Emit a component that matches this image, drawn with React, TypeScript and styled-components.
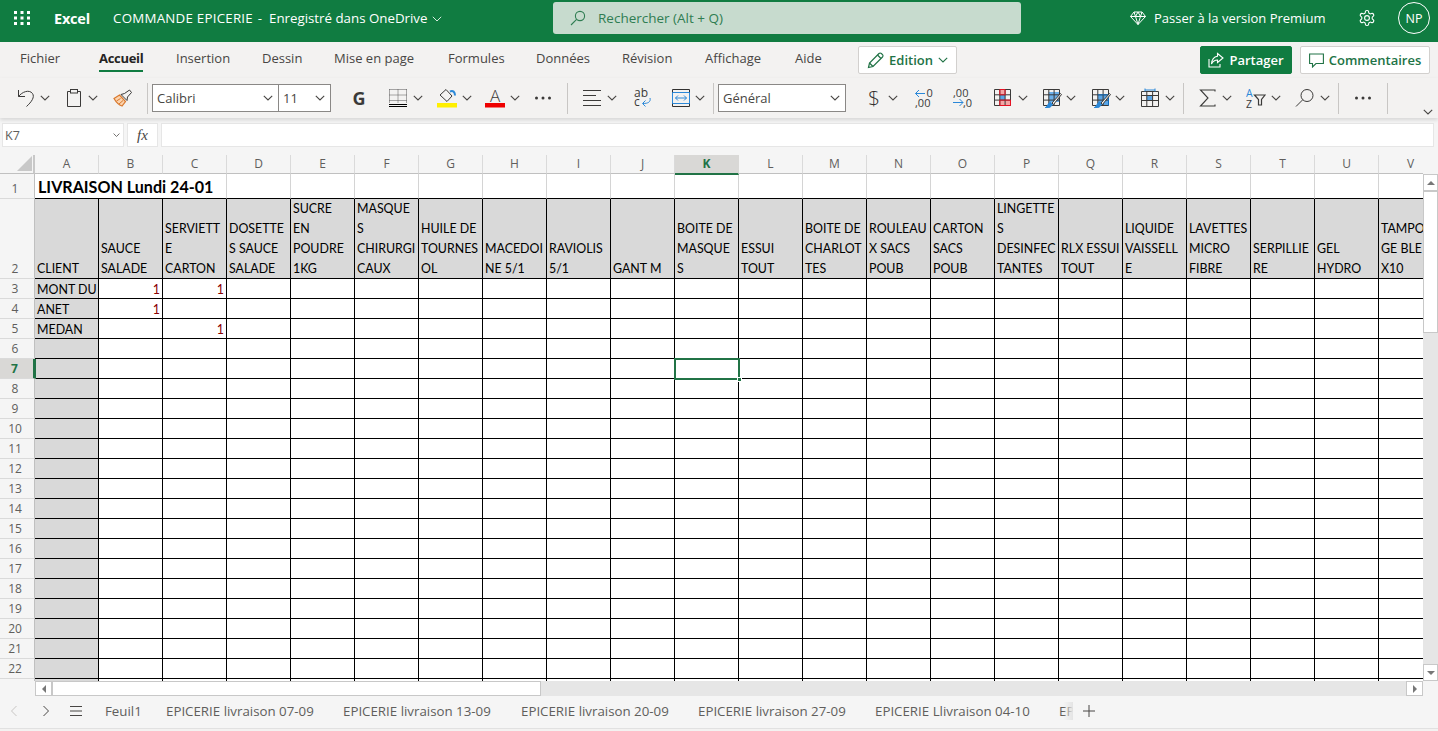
import React from "react";
import styled, { createGlobalStyle, css } from "styled-components";

const UI = `"Open Sans", "Noto Sans", "Liberation Sans", sans-serif`;
const CELL = `Lato, "Open Sans", "Liberation Sans", sans-serif`;
const GREEN = "#107C41";
const DARK_GREEN = "#217346";

const Global = createGlobalStyle`
  html, body { margin: 0; padding: 0; overflow: hidden; background: #f3f2f1; }
  * { box-sizing: border-box; }
`;

const Page = styled.div`
  width: 1438px;
  height: 731px;
  display: flex;
  flex-direction: column;
  overflow: hidden;
  font-family: ${UI};
  background: #f3f2f1;
`;

/* ---------- top bar ---------- */
const TopBar = styled.header`
  height: 42px;
  flex: none;
  background: ${GREEN};
  color: #fff;
  display: flex;
  align-items: center;
  padding-bottom: 6px;
`;
const TopLeft = styled.div`
  width: 553px;
  flex: none;
  display: flex;
  align-items: center;
  padding-left: 14px;
`;
const Brand = styled.span`
  font-size: 14.5px;
  font-weight: 700;
  margin-left: 24px;
  width: 59px;
  letter-spacing: -0.2px;
`;
const DocName = styled.span`
  font-size: 13.3px;
  white-space: nowrap;
  letter-spacing: 0.25px;
  width: 138px;
  flex: none;
`;
const DocDash = styled.span`
  font-size: 13.3px;
  width: 18px;
  flex: none;
  text-align: center;
`;
const DocStatus = styled.span`
  font-size: 13.3px;
  white-space: nowrap;
  width: 156px;
  flex: none;
`;
const TitleChevron = styled.svg`
  width: 10px;
  height: 6px;
  margin-left: 7px;
  margin-top: 2px;
  fill: none;
  stroke: #d7ebdf;
  stroke-width: 1;
`;
const SearchBox = styled.div`
  width: 468px;
  height: 32px;
  flex: none;
  background: #c7dbce;
  border-radius: 3px;
  display: flex;
  align-items: center;
  padding-left: 17px;
  color: #2f7d52;
  font-size: 13.5px;
  gap: 12px;
`;
const PremiumLink = styled.div`
  margin-left: 109px;
  width: 204px;
  display: flex;
  align-items: center;
  gap: 8px;
  font-size: 13px;
  white-space: nowrap;
`;
const Gear = styled.div`
  margin-left: 24px;
  width: 18px;
  height: 18px;
  display: flex;
`;
const Avatar = styled.div`
  margin-left: 22px;
  width: 32px;
  height: 32px;
  border: 1px solid #fff;
  border-radius: 50%;
  display: flex;
  align-items: center;
  justify-content: center;
  font-size: 12.5px;
`;

/* ---------- ribbon tabs ---------- */
const RibbonTabs = styled.nav`
  height: 36px;
  flex: none;
  display: flex;
  align-items: flex-start;
  padding-left: 20px;
`;
const TabSlot = styled.div<{ $w: number }>`
  width: ${(p) => p.$w}px;
  flex: none;
  height: 30px;
  padding-top: 7px;
`;
const TabLabel = styled.div<{ $active?: boolean }>`
  width: fit-content;
  height: 23px;
  font-size: 13px;
  line-height: 18px;
  color: ${(p) => (p.$active ? "#252423" : "#484644")};
  font-weight: ${(p) => (p.$active ? 700 : 400)};
  border-bottom: 2px solid ${(p) => (p.$active ? GREEN : "transparent")};
  white-space: nowrap;
  ${(p) => p.$active && css`letter-spacing: -0.3px;`}
`;
const RibbonButton = styled.div<{ $w: number; $ml: number; $primary?: boolean }>`
  width: ${(p) => p.$w}px;
  margin-left: ${(p) => p.$ml}px;
  height: 28px;
  margin-top: 4px;
  flex: none;
  display: flex;
  align-items: center;
  justify-content: center;
  gap: 5px;
  border-radius: 2px;
  font-size: 13px;
  font-weight: 600;
  background: ${(p) => (p.$primary ? GREEN : "#fff")};
  color: ${(p) => (p.$primary ? "#fff" : DARK_GREEN)};
  border: 1px solid ${(p) => (p.$primary ? GREEN : "#d2d0ce")};
`;

/* ---------- toolbar ---------- */
const Toolbar = styled.div`
  height: 40px;
  flex: none;
  display: flex;
  align-items: center;
  box-shadow: 0 2px 4px rgba(0, 0, 0, 0.13);
  position: relative;
  z-index: 3;
`;
const Tool = styled.div<{ $w?: number; $ml: number; $end?: boolean }>`
  width: ${(p) => p.$w ?? 20}px;
  margin-left: ${(p) => p.$ml}px;
  flex: none;
  display: flex;
  justify-content: center;
  align-items: center;
  color: #323130;
  ${(p) => p.$end && css`align-self: flex-end; margin-bottom: 3px;`}
`;
const ToolSep = styled.div<{ $ml: number }>`
  width: 1px;
  height: 31px;
  flex: none;
  margin-left: ${(p) => p.$ml}px;
  background: #c8c6c4;
`;
const SelectBox = styled.div<{ $w: number; $ml?: number; $joined?: boolean }>`
  width: ${(p) => p.$w}px;
  margin-left: ${(p) => p.$ml ?? 0}px;
  height: 28px;
  flex: none;
  background: #fff;
  border: 1px solid #8a8886;
  ${(p) => p.$joined && css`border-left: none;`}
  display: flex;
  align-items: center;
  justify-content: space-between;
  padding: 0 5px 0 4px;
  font-size: 13px;
  color: #484644;
`;
const BoldG = styled.span`
  font-family: ${UI};
  font-size: 18px;
  font-weight: 700;
  color: #3b3a39;
`;
const Dollar = styled.span`
  font-size: 21px;
  font-weight: 300;
  color: #323130;
`;

/* ---------- formula bar ---------- */
const FormulaBar = styled.div`
  height: 37px;
  flex: none;
  display: flex;
  padding: 5px 4px 0 2px;
  align-items: flex-start;
  background: #f5f5f5;
`;
const NameBox = styled.div`
  width: 122px;
  height: 24px;
  background: #fff;
  border: 1px solid #e6e6e6;
  display: flex;
  align-items: center;
  justify-content: space-between;
  padding: 0 3px 0 2px;
  font-size: 12.5px;
  color: #605e5c;
`;
const FxBox = styled.div`
  width: 31px;
  height: 24px;
  margin-left: 3px;
  background: #fff;
  border: 1px solid #e6e6e6;
  display: flex;
  align-items: center;
  justify-content: center;
  font: italic 15px "Liberation Serif", serif;
  color: #484644;
`;
const FormulaInput = styled.div`
  flex: 1;
  height: 24px;
  margin-left: 3px;
  background: #fff;
  border: 1px solid #e6e6e6;
`;

/* ---------- sheet ---------- */
const SheetRow = styled.div`
  height: 526px;
  flex: none;
  display: flex;
  background: #f5f5f5;
`;
const SheetViewport = styled.div`
  width: 1423px;
  height: 526px;
  overflow: hidden;
`;
const Grid = styled.div`
  display: grid;
  grid-template-columns: 35px repeat(22, 64px);
  grid-template-rows: 19px 25px 80px repeat(21, 20px);
  width: 1443px;
  background: #fff;
`;
const Corner = styled.div`
  background: #f5f5f5;
  border-right: 2px solid #c8c8c8;
  border-bottom: 1px solid #c0c0c0;
  display: flex;
  align-items: flex-end;
  justify-content: flex-end;
  padding: 0 1px 2px 0;
`;
const ColHead = styled.div<{ $sel?: boolean }>`
  background: ${(p) => (p.$sel ? "#d9d8d6" : "#f5f5f5")};
  border-right: 1px solid ${(p) => (p.$sel ? "#d9d8d6" : "#dadada")};
  border-bottom: ${(p) => (p.$sel ? `2px solid ${DARK_GREEN}` : "1px solid #c0c0c0")};
  margin-bottom: ${(p) => (p.$sel ? "-1px" : "0")};
  position: relative;
  z-index: ${(p) => (p.$sel ? 1 : 0)};
  text-align: center;
  font-family: ${UI};
  font-size: 12px;
  line-height: 17px;
  color: ${(p) => (p.$sel ? DARK_GREEN : "#605e5c")};
  font-weight: ${(p) => (p.$sel ? 700 : 400)};
`;
const RowHead = styled.div<{ $sel?: boolean }>`
  background: ${(p) => (p.$sel ? "#d9d8d6" : "#f5f5f5")};
  border-right: ${(p) => (p.$sel ? `3px solid ${DARK_GREEN}` : "1px solid #c0c0c0")};
  margin-right: ${(p) => (p.$sel ? "-1px" : "0")};
  border-bottom: 1px solid #dadada;
  position: relative;
  z-index: ${(p) => (p.$sel ? 1 : 0)};
  display: flex;
  align-items: flex-end;
  justify-content: center;
  padding-right: 4px;
  font-size: 12px;
  line-height: 18px;
  color: ${(p) => (p.$sel ? DARK_GREEN : "#605e5c")};
  font-weight: ${(p) => (p.$sel ? 700 : 400)};
`;
const TitleCell = styled.div`
  grid-column: span 3;
  border-bottom: 1px solid #000;
  border-right: 1px solid #d4d4d4;
  padding-left: 3px;
  font: 700 16.1px/26px ${CELL};
  color: #000;
  white-space: nowrap;
`;
const BlankTop = styled.div`
  border-bottom: 1px solid #000;
  border-right: 1px solid #d4d4d4;
`;
const Cell = styled.div<{ $gray?: boolean }>`
  position: relative;
  background: ${(p) => (p.$gray ? "#d9d9d9" : "#fff")};
  border-right: 1px solid #000;
  border-bottom: 1px solid #000;
  padding: 0 2px;
  font: 400 12.4px/21px ${CELL};
  color: #000;
  white-space: nowrap;
  overflow: hidden;
`;
const HeadCell = styled(Cell)`
  display: flex;
  flex-direction: column;
  justify-content: flex-end;
  background: #d9d9d9;
  line-height: 20px;
  & > div:last-child {
    margin-bottom: -1px;
  }
`;
const NumberCell = styled(Cell)`
  text-align: right;
  padding-right: 2px;
  color: #8a0000;
`;
const ActiveCell = styled(Cell)`
  overflow: visible;
`;
const SelectionBox = styled.div`
  position: absolute;
  left: -1px;
  top: -1px;
  width: 66px;
  height: 22px;
  border: 2px solid ${DARK_GREEN};
  z-index: 2;
`;
const FillHandle = styled.div`
  position: absolute;
  right: -4px;
  bottom: -4px;
  width: 5px;
  height: 5px;
  background: ${DARK_GREEN};
  border: 1px solid #fff;
`;

/* ---------- scrollbars ---------- */
const VScroll = styled.div`
  width: 15px;
  display: flex;
  flex-direction: column;
`;
const VScrollTop = styled.div`
  height: 19px;
`;
const VTrack = styled.div`
  flex: 1;
  background: #e6e6e6;
`;
const ScrollBtn = styled.div<{ $dir: "up" | "down" | "left" | "right" }>`
  width: ${(p) => (p.$dir === "up" || p.$dir === "down" ? "15px" : "17px")};
  height: ${(p) => (p.$dir === "up" || p.$dir === "down" ? "17px" : "15px")};
  flex: none;
  background: #fff;
  border: 1px solid #c8c8c8;
  display: flex;
  align-items: center;
  justify-content: center;
  &::after {
    content: "";
    width: 0;
    height: 0;
    border-style: solid;
    border-color: transparent;
    ${(p) =>
      p.$dir === "up"
        ? css`border-width: 0 4px 4px; border-bottom-color: #777;`
        : p.$dir === "down"
        ? css`border-width: 4px 4px 0; border-top-color: #777;`
        : p.$dir === "left"
        ? css`border-width: 4px 4px 4px 0; border-right-color: #777;`
        : css`border-width: 4px 0 4px 4px; border-left-color: #777;`}
  }
`;
const VThumb = styled.div`
  height: 142px;
  flex: none;
  background: #fff;
  border: 1px solid #c8c8c8;
`;
const HScroll = styled.div`
  height: 15px;
  flex: none;
  display: flex;
  background: #f5f5f5;
  padding-left: 35px;
  padding-right: 15px;
`;
const HThumb = styled.div`
  width: 489px;
  flex: none;
  background: #fff;
  border: 1px solid #c8c8c8;
`;
const HTrack = styled.div`
  flex: 1;
  background: #e6e6e6;
`;

/* ---------- sheet tabs ---------- */
const SheetBar = styled.footer`
  height: 32px;
  flex: none;
  background: #f5f5f5;
  display: flex;
  align-items: center;
  font-size: 13.3px;
  color: #605e5c;
  padding-bottom: 2px;
`;
const NavBtn = styled.div<{ $ml: number; $w?: number }>`
  margin-left: ${(p) => p.$ml}px;
  width: ${(p) => p.$w ?? 8}px;
  flex: none;
  display: flex;
  justify-content: center;
`;
const SheetTabs = styled.div`
  margin-left: 23px;
  width: 968px;
  flex: none;
  display: flex;
  overflow: hidden;
  position: relative;
  white-space: nowrap;
  &::after {
    content: "";
    position: absolute;
    right: 0;
    top: 0;
    bottom: 0;
    width: 10px;
    background: linear-gradient(to right, rgba(245, 245, 245, 0), #e4e4e4);
  }
`;
const SheetTab = styled.div<{ $w: number }>`
  width: ${(p) => p.$w}px;
  flex: none;
`;
const BottomEdge = styled.div`
  height: 3px;
  flex: none;
  background: #f3f2f1;
  border-top: 1px solid #e1e1e1;
`;

/* ---------- icons ---------- */
const Svg = styled.svg`
  width: 20px;
  height: 20px;
  flex: none;
  display: block;
  fill: none;
  stroke: #3b3a39;
  stroke-width: 1;
`;
const BLUE = "#2b88d8";
const SvgText = styled.text`
  font-family: ${UI};
  stroke: none;
  fill: #3b3a39;
`;

const Chev = ({ color = "#484644", w = 10 }: { color?: string; w?: number }) => (
  <svg width={w} height={w * 0.6} viewBox="0 0 10 6" fill="none" stroke={color} strokeWidth="1.1" style={{ display: "block" }}>
    <polyline points="0.8,0.8 5,5 9.2,0.8" />
  </svg>
);

const Waffle = () => (
  <svg width="16" height="14" viewBox="0 0 16 14" fill="#fff" style={{ display: "block" }}>
    {[0, 6.5, 13].map((x) =>
      [0, 5.5, 11].map((y) => <rect key={`${x}-${y}`} x={x} y={y} width="3" height="3" />)
    )}
  </svg>
);
const SearchIcon = ({ color = "#2f7d52" }: { color?: string }) => (
  <svg width="16" height="16" viewBox="0 0 16 16" fill="none" stroke={color} strokeWidth="1.1" style={{ display: "block" }}>
    <circle cx="10" cy="6" r="4.6" />
    <line x1="6.6" y1="9.4" x2="1" y2="15" />
  </svg>
);
const Diamond = () => (
  <svg width="16" height="16" viewBox="0 0 16 16" fill="none" stroke="#fff" strokeWidth="1" style={{ display: "block" }}>
    <path d="M4 2h8l3.5 4.5L8 14.5.5 6.5z" />
    <path d="M.5 6.5h15M5.5 6.5L8 14.5l2.5-8M5.5 6.5L8 2l2.5 4.5M4 2l1.5 4.5M12 2l-1.5 4.5" />
  </svg>
);
const GearIcon = () => (
  <svg width="18" height="18" viewBox="0 0 24 24" fill="none" stroke="#fff" strokeWidth="1.5" style={{ display: "block" }}>
    <path d="M12.22 2h-.44a2 2 0 0 0-2 2v.18a2 2 0 0 1-1 1.73l-.43.25a2 2 0 0 1-2 0l-.15-.08a2 2 0 0 0-2.73.73l-.22.38a2 2 0 0 0 .73 2.73l.15.1a2 2 0 0 1 1 1.72v.51a2 2 0 0 1-1 1.74l-.15.09a2 2 0 0 0-.73 2.73l.22.38a2 2 0 0 0 2.73.73l.15-.08a2 2 0 0 1 2 0l.43.25a2 2 0 0 1 1 1.73V20a2 2 0 0 0 2 2h.44a2 2 0 0 0 2-2v-.18a2 2 0 0 1 1-1.73l.43-.25a2 2 0 0 1 2 0l.15.08a2 2 0 0 0 2.73-.73l.22-.39a2 2 0 0 0-.73-2.73l-.15-.08a2 2 0 0 1-1-1.74v-.5a2 2 0 0 1 1-1.74l.15-.09a2 2 0 0 0 .73-2.73l-.22-.38a2 2 0 0 0-2.73-.73l-.15.08a2 2 0 0 1-2 0l-.43-.25a2 2 0 0 1-1-1.73V4a2 2 0 0 0-2-2z" />
    <circle cx="12" cy="12" r="3.2" />
  </svg>
);
const Pencil = () => (
  <svg width="17" height="17" viewBox="0 0 17 17" fill="none" stroke={DARK_GREEN} strokeWidth="1.2" style={{ display: "block" }}>
    <path d="M1.5 15.5l1-4.5L12 1.5a1.6 1.6 0 0 1 2.3 0l1.2 1.2a1.6 1.6 0 0 1 0 2.3L6 14.5z" />
    <path d="M10.5 3l3.5 3.5M2.5 11L6 14.5" />
  </svg>
);
const ShareIcon = () => (
  <svg width="16" height="16" viewBox="0 0 16 16" fill="none" stroke="#fff" strokeWidth="1.1" style={{ display: "block" }}>
    <path d="M1 7v8h11v-3" />
    <path d="M9.5 1.5L15 6l-5.5 4.5V8C7 8 5 9 3.5 12 3.8 8 6 4.8 9.5 4.3z" />
  </svg>
);
const CommentIcon = () => (
  <svg width="15" height="15" viewBox="0 0 15 15" fill="none" stroke={DARK_GREEN} strokeWidth="1.1" style={{ display: "block" }}>
    <path d="M.6 1h13.8v9.5H7L3.5 14v-3.5H.6z" />
  </svg>
);

const UndoIcon = () => (
  <Svg viewBox="0 0 20 20">
    <path d="M2.5 2v6.5H9" />
    <path d="M2.5 8.5C6 4 13 1 16.5 5.5 19 9 15.5 14 10.5 18.5" />
  </Svg>
);
const ClipboardIcon = () => (
  <Svg viewBox="0 0 20 20">
    <path d="M6.5 3.5H3.5v15h13v-15h-3" />
    <rect x="6.5" y="1.5" width="7" height="3.5" />
  </Svg>
);
const BrushIcon = () => (
  <Svg viewBox="0 0 20 20">
    <path d="M1 10.5l5.500-3.500 6 6.500L9 18 C6 17 3 14 1 10.5z" fill="#fbd3ae" stroke="#d9782d" strokeWidth="1.2" />
    <path d="M3.5 13l4-2.500M6 16l4-3.500" stroke="#d9782d" />
    <path d="M8 6.5l3.500-1 5-3.500 2 2.500-4 4.500-.5 3.500z" fill="#f3f2f1" stroke="#3b3a39" />
  </Svg>
);
const BorderIcon = () => (
  <Svg viewBox="0 0 20 20">
    <path d="M1.5 1.5h17M1.5 7h17M1.5 12.5h17M1.5 1.5v14M10 1.5v14M18.5 1.5v14" strokeDasharray="1 1" stroke="#555" />
    <path d="M1 16.5h18" stroke="#000" />
    <path d="M1 18.5h18" stroke="#000" />
  </Svg>
);
const FillIcon = () => (
  <Svg viewBox="0 0 20 20">
    <path d="M9 1.5l6 6.500-5 5.500-7-6.500z" />
    <path d="M13 3.5c3-1.500 5 .5 5 4" stroke={BLUE} strokeWidth="2" />
    <rect x="0" y="15" width="20" height="4.5" fill="#ffef00" stroke="none" />
  </Svg>
);
const FontColorIcon = () => (
  <Svg viewBox="0 0 20 20">
    <SvgText x="10" y="13.5" fontSize="17" textAnchor="middle" style={{ fontWeight: 300 }}>A</SvgText>
    <rect x="0" y="15" width="20" height="4.5" fill="#ee0000" stroke="none" />
  </Svg>
);
const Dots = () => (
  <Svg viewBox="0 0 20 20">
    <g fill="#3b3a39" stroke="none">
      <circle cx="3.5" cy="10" r="1.5" />
      <circle cx="10" cy="10" r="1.5" />
      <circle cx="16.5" cy="10" r="1.5" />
    </g>
  </Svg>
);
const AlignIcon = () => (
  <Svg viewBox="0 0 20 20">
    <path d="M1 2.5h18M1 7.5h13M1 12.5h18M1 17.5h18" />
  </Svg>
);
const WrapIcon = () => (
  <Svg viewBox="0 0 20 20">
    <SvgText x="2" y="9" fontSize="12">ab</SvgText>
    <SvgText x="2" y="18" fontSize="12">c</SvgText>
    <path d="M18 10c1 4-2 5.500-7 5.500M13.5 12.5l-3 3 3 3" stroke={BLUE} />
  </Svg>
);
const MergeIcon = () => (
  <Svg viewBox="0 0 20 20">
    <path d="M1.5 1.5h17v17h-17zM1.5 15.5h17" stroke="#323130" />
    <path d="M1.5 4.5h17v11h-17z" stroke={BLUE} />
    <path d="M4.5 10h11M7 7.5L4.500 10 7 12.500M13 7.500l2.500 2.500-2.500 2.500" stroke={BLUE} />
  </Svg>
);
const DecPlusIcon = () => (
  <Svg viewBox="0 0 20 20">
    <path d="M11 5.5H1.500M5 2L1.500 5.500 5 9" stroke={BLUE} />
    <SvgText x="12.5" y="9" fontSize="11">0</SvgText>
    <SvgText x="1" y="19" fontSize="11">,00</SvgText>
  </Svg>
);
const DecMinusIcon = () => (
  <Svg viewBox="0 0 20 20">
    <SvgText x="1" y="8.500" fontSize="11">,00</SvgText>
    <path d="M1 14.5h10M7.500 11l3.500 3.500-3.500 3.500" stroke={BLUE} />
    <SvgText x="11" y="19" fontSize="11">,0</SvgText>
  </Svg>
);
const TableBase = () => (
  <path d="M1.5 1.5h16v16h-16zM1.5 6.800h16M1.500 12.100h16M6.800 1.500v16M12.100 1.500v16" stroke="#3b3a39" />
);
const CondIcon = () => (
  <Svg viewBox="0 0 20 20">
    <rect x="6.8" y="1.5" width="5.3" height="5.3" fill="#f4a6a6" stroke="none" />
    <rect x="6.8" y="6.8" width="5.3" height="5.3" fill="#5aa5e6" stroke="none" />
    <rect x="6.8" y="12.1" width="10.7" height="5.4" fill="#f4a6a6" stroke="none" />
    <TableBase />
    <path d="M6.8 1.5h5.300v5.300h-5.300zM6.800 12.100h10.700v5.400H6.800z" stroke="#e81123" />
  </Svg>
);
const BrushOver = () => (
  <>
    <path d="M3 20c3 .5 6-.5 7.500-3.500l-2-2.500C6 15 6 18 3 20z" fill="#2b88d8" stroke="#2b88d8" />
    <path d="M10 15L18.500 5.500l1 1L11.500 16.500z" fill="#f3f2f1" stroke="#3b3a39" />
  </>
);
const TableStyleIcon = () => (
  <Svg viewBox="0 0 20 20">
    <rect x="6.8" y="4" width="10.7" height="10" fill="#6cb0ea" stroke="none" />
    <TableBase />
    <BrushOver />
  </Svg>
);
const CellStyleIcon = () => (
  <Svg viewBox="0 0 20 20">
    <rect x="6.8" y="6.8" width="10.7" height="10.7" fill="#5aa5e6" stroke="none" />
    <TableBase />
    <path d="M6.8 6.800h10.700v10.700" stroke="#0f6cbd" />
    <BrushOver />
  </Svg>
);
const CellsIcon = () => (
  <Svg viewBox="0 0 20 20">
    <rect x="6.8" y="7.5" width="5.8" height="5" fill="#5aa5e6" stroke="none" />
    <path d="M1.5 3.5h17v15h-17zM1.500 7.500h17M1.500 12.500h17M6.800 3.500v15M12.600 3.500v15" stroke="#3b3a39" />
    <path d="M5 .5v3M15 .5v3M5 2h10" stroke={BLUE} />
  </Svg>
);
const SumIcon = () => (
  <Svg viewBox="0 0 20 20">
    <path d="M17 3.5V2H2.500L10 10l-7.500 8H17v-1.500" strokeWidth="1.1" />
  </Svg>
);
const SortIcon = () => (
  <Svg viewBox="0 0 20 20">
    <SvgText x="0" y="9" fontSize="10.5" style={{ fill: BLUE }}>A</SvgText>
    <SvgText x="0" y="19.5" fontSize="10.5">Z</SvgText>
    <path d="M8.5 7h10.500l-3.500 4.500V17H12.500v-5.500z" strokeWidth="1.2" />
  </Svg>
);
const FindIcon = () => (
  <Svg viewBox="0 0 20 20">
    <circle cx="12" cy="7.5" r="6" />
    <line x1="7.7" y1="11.8" x2="1" y2="18.5" />
  </Svg>
);

/* ---------- data ---------- */
const COLS = "ABCDEFGHIJKLMNOPQRSTUV".split("");
const HEADERS: string[][] = [
  ["CLIENT"],
  ["SAUCE", "SALADE"],
  ["SERVIETT", "E", "CARTON"],
  ["DOSETTE", "S SAUCE", "SALADE"],
  ["SUCRE", "EN", "POUDRE", "1KG"],
  ["MASQUE", "S", "CHIRURGI", "CAUX"],
  ["HUILE DE", "TOURNES", "OL"],
  ["MACEDOI", "NE 5/1"],
  ["RAVIOLIS", "5/1"],
  ["GANT M"],
  ["BOITE DE", "MASQUE", "S"],
  ["ESSUI", "TOUT"],
  ["BOITE DE", "CHARLOT", "TES"],
  ["ROULEAU", "X SACS", "POUB"],
  ["CARTON", "SACS", "POUB"],
  ["LINGETTE", "S", "DESINFEC", "TANTES"],
  ["RLX ESSUI", "TOUT"],
  ["LIQUIDE", "VAISSELL", "E"],
  ["LAVETTES", "MICRO", "FIBRE"],
  ["SERPILLIE", "RE"],
  ["GEL", "HYDRO"],
  ["TAMPO", "GE BLE", "X10"],
];
const NAMES: Record<number, string> = { 3: "MONT DU", 4: "ANET", 5: "MEDAN" };
const ONES = new Set(["3-B", "3-C", "4-B", "5-C"]);
const DATA_ROWS = Array.from({ length: 21 }, (_, i) => i + 3);
const RIBBON_TABS: [string, number][] = [
  ["Fichier", 79],
  ["Accueil", 77],
  ["Insertion", 86],
  ["Dessin", 72],
  ["Mise en page", 114],
  ["Formules", 88],
  ["Données", 86],
  ["Révision", 83],
  ["Affichage", 90],
  ["Aide", 63],
];
const SHEETS: [string, number][] = [
  ["Feuil1", 61],
  ["EPICERIE livraison 07-09", 177],
  ["EPICERIE livraison 13-09", 178],
  ["EPICERIE livraison 20-09", 177],
  ["EPICERIE livraison 27-09", 177],
  ["EPICERIE Llivraison 04-10", 184],
  ["EPICERIE livraison 11-10", 178],
];

export default function App() {
  return (
    <Page>
      <Global />
      <TopBar>
        <TopLeft>
          <Waffle />
          <Brand>Excel</Brand>
          <DocName>COMMANDE EPICERIE</DocName>
          <DocDash>-</DocDash>
          <DocStatus>Enregistré dans OneDrive</DocStatus>
          <TitleChevron viewBox="0 0 10 6">
            <polyline points="0.8,0.8 5,5 9.2,0.8" />
          </TitleChevron>
        </TopLeft>
        <SearchBox>
          <SearchIcon />
          <span>Rechercher (Alt + Q)</span>
        </SearchBox>
        <PremiumLink>
          <Diamond />
          <span>Passer à la version Premium</span>
        </PremiumLink>
        <Gear>
          <GearIcon />
        </Gear>
        <Avatar>NP</Avatar>
      </TopBar>

      <RibbonTabs>
        {RIBBON_TABS.map(([label, w]) => (
          <TabSlot key={label} $w={w}>
            <TabLabel $active={label === "Accueil"}>{label}</TabLabel>
          </TabSlot>
        ))}
        <RibbonButton $w={99} $ml={0}>
          <Pencil />
          <span>Edition</span>
          <Chev color={DARK_GREEN} />
        </RibbonButton>
        <RibbonButton $w={92} $ml={243} $primary>
          <ShareIcon />
          <span>Partager</span>
        </RibbonButton>
        <RibbonButton $w={130} $ml={8}>
          <CommentIcon />
          <span>Commentaires</span>
        </RibbonButton>
      </RibbonTabs>

      <Toolbar>
        <Tool $ml={16}><UndoIcon /></Tool>
        <Tool $ml={4} $w={10}><Chev /></Tool>
        <Tool $ml={14}><ClipboardIcon /></Tool>
        <Tool $ml={4} $w={10}><Chev /></Tool>
        <Tool $ml={15}><BrushIcon /></Tool>
        <ToolSep $ml={14} />
        <SelectBox $w={127} $ml={4}>
          <span>Calibri</span>
          <Chev />
        </SelectBox>
        <SelectBox $w={52} $joined>
          <span>11</span>
          <Chev />
        </SelectBox>
        <Tool $ml={19} $w={18}><BoldG>G</BoldG></Tool>
        <Tool $ml={20}><BorderIcon /></Tool>
        <Tool $ml={5} $w={10}><Chev /></Tool>
        <Tool $ml={14}><FillIcon /></Tool>
        <Tool $ml={5} $w={10}><Chev /></Tool>
        <Tool $ml={13}><FontColorIcon /></Tool>
        <Tool $ml={5} $w={10}><Chev /></Tool>
        <Tool $ml={13}><Dots /></Tool>
        <ToolSep $ml={14} />
        <Tool $ml={14}><AlignIcon /></Tool>
        <Tool $ml={5} $w={10}><Chev /></Tool>
        <Tool $ml={15}><WrapIcon /></Tool>
        <Tool $ml={19}><MergeIcon /></Tool>
        <Tool $ml={4} $w={10}><Chev /></Tool>
        <ToolSep $ml={8} />
        <SelectBox $w={128} $ml={4}>
          <span>Général</span>
          <Chev />
        </SelectBox>
        <Tool $ml={20} $w={16}><Dollar>$</Dollar></Tool>
        <Tool $ml={6} $w={10}><Chev /></Tool>
        <Tool $ml={16}><DecPlusIcon /></Tool>
        <Tool $ml={18}><DecMinusIcon /></Tool>
        <Tool $ml={21}><CondIcon /></Tool>
        <Tool $ml={5} $w={10}><Chev /></Tool>
        <Tool $ml={14}><TableStyleIcon /></Tool>
        <Tool $ml={4} $w={10}><Chev /></Tool>
        <Tool $ml={15}><CellStyleIcon /></Tool>
        <Tool $ml={4} $w={10}><Chev /></Tool>
        <Tool $ml={15}><CellsIcon /></Tool>
        <Tool $ml={5} $w={10}><Chev /></Tool>
        <ToolSep $ml={8} />
        <Tool $ml={15} $w={18}><SumIcon /></Tool>
        <Tool $ml={5} $w={10}><Chev /></Tool>
        <Tool $ml={15} $w={18}><SortIcon /></Tool>
        <Tool $ml={6} $w={10}><Chev /></Tool>
        <Tool $ml={14}><FindIcon /></Tool>
        <Tool $ml={5} $w={10}><Chev /></Tool>
        <ToolSep $ml={8} />
        <Tool $ml={14}><Dots /></Tool>
        <ToolSep $ml={14} />
        <Tool $ml={34} $w={12} $end><Chev /></Tool>
      </Toolbar>

      <FormulaBar>
        <NameBox>
          <span>K7</span>
          <Chev w={7} />
        </NameBox>
        <FxBox>fx</FxBox>
        <FormulaInput />
      </FormulaBar>

      <SheetRow>
        <SheetViewport>
          <Grid>
            <Corner>
              <svg width="15" height="15" viewBox="0 0 15 15" style={{ display: "block" }}>
                <polygon points="15,0 15,15 0,15" fill="#c8c8c8" />
              </svg>
            </Corner>
            {COLS.map((c) => (
              <ColHead key={c} $sel={c === "K"}>{c}</ColHead>
            ))}

            <RowHead>1</RowHead>
            <TitleCell>LIVRAISON Lundi 24-01</TitleCell>
            {COLS.slice(3).map((c) => (
              <BlankTop key={c} />
            ))}

            <RowHead>2</RowHead>
            {HEADERS.map((lines, i) => (
              <HeadCell key={COLS[i]}>
                {lines.map((l) => (
                  <div key={l}>{l}</div>
                ))}
              </HeadCell>
            ))}

            {DATA_ROWS.map((r) => (
              <React.Fragment key={r}>
                <RowHead $sel={r === 7}>{r}</RowHead>
                {COLS.map((c) => {
                  const key = `${r}-${c}`;
                  if (c === "A") return <Cell key={key} $gray>{NAMES[r]}</Cell>;
                  if (ONES.has(key)) return <NumberCell key={key}>1</NumberCell>;
                  if (r === 7 && c === "K")
                    return (
                      <ActiveCell key={key}>
                        <SelectionBox>
                          <FillHandle />
                        </SelectionBox>
                      </ActiveCell>
                    );
                  return <Cell key={key} />;
                })}
              </React.Fragment>
            ))}
          </Grid>
        </SheetViewport>
        <VScroll>
          <VScrollTop />
          <ScrollBtn $dir="up" />
          <VThumb />
          <VTrack />
          <ScrollBtn $dir="down" />
        </VScroll>
      </SheetRow>

      <HScroll>
        <ScrollBtn $dir="left" />
        <HThumb />
        <HTrack />
        <ScrollBtn $dir="right" />
      </HScroll>

      <SheetBar>
        <NavBtn $ml={10}>
          <svg width="8" height="12" viewBox="0 0 8 12" fill="none" stroke="#c8c6c4" style={{ display: "block" }}><polyline points="6.5,1 1.5,6 6.5,11" /></svg>
        </NavBtn>
        <NavBtn $ml={24}>
          <svg width="8" height="12" viewBox="0 0 8 12" fill="none" stroke="#484644" style={{ display: "block" }}><polyline points="1.5,1 6.5,6 1.5,11" /></svg>
        </NavBtn>
        <NavBtn $ml={20} $w={12}>
          <svg width="12" height="10" viewBox="0 0 12 10" fill="none" stroke="#484644" style={{ display: "block" }}><path d="M0 .5h12M0 5h12M0 9.5h12" /></svg>
        </NavBtn>
        <SheetTabs>
          {SHEETS.map(([label, w]) => (
            <SheetTab key={label} $w={w}>{label}</SheetTab>
          ))}
        </SheetTabs>
        <NavBtn $ml={10} $w={12}>
          <svg width="12" height="12" viewBox="0 0 12 12" fill="none" stroke="#484644" style={{ display: "block" }}><path d="M6 0v12M0 6h12" /></svg>
        </NavBtn>
      </SheetBar>
      <BottomEdge />
    </Page>
  );
}
